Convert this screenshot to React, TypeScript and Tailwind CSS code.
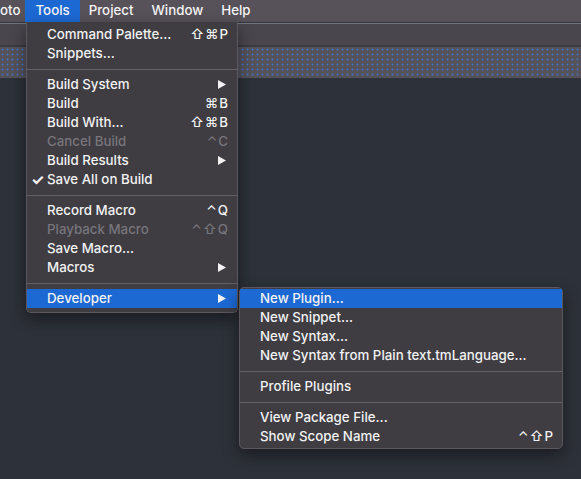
import React from "react";

type Item = {
  label?: string;
  shortcut?: string;
  arrow?: boolean;
  disabled?: boolean;
  checked?: boolean;
  active?: boolean;
  sep?: boolean;
};

const toolsItems: Item[] = [
  { label: "Command Palette...", shortcut: "⇧⌘P" },
  { label: "Snippets..." },
  { sep: true },
  { label: "Build System", arrow: true },
  { label: "Build", shortcut: "⌘B" },
  { label: "Build With...", shortcut: "⇧⌘B" },
  { label: "Cancel Build", shortcut: "⌃C", disabled: true },
  { label: "Build Results", arrow: true },
  { label: "Save All on Build", checked: true },
  { sep: true },
  { label: "Record Macro", shortcut: "⌃Q" },
  { label: "Playback Macro", shortcut: "⌃⇧Q", disabled: true },
  { label: "Save Macro..." },
  { label: "Macros", arrow: true },
  { sep: true },
  { label: "Developer", arrow: true, active: true },
];

const developerItems: Item[] = [
  { label: "New Plugin...", active: true },
  { label: "New Snippet..." },
  { label: "New Syntax..." },
  { label: "New Syntax from Plain text.tmLanguage..." },
  { sep: true },
  { label: "Profile Plugins" },
  { sep: true },
  { label: "View Package File..." },
  { label: "Show Scope Name", shortcut: "⌃⇧P" },
];

const Arrow = () => (
  <svg width="8" height="9" viewBox="0 0 8 9" className="mr-[3px]">
    <polygon points="0,0 8,4.5 0,9" fill="#f2f2f2" />
  </svg>
);

const MenuRow = ({ item }: { item: Item }) => {
  if (item.sep) {
    return (
      <div className="h-[12px] flex items-center">
        <div className="h-px w-full bg-[#636167]" />
      </div>
    );
  }
  const color = item.disabled ? "text-[#77757b]" : "text-[#f2f2f2]";
  return (
    <div
      className={`relative h-[19px] flex items-center justify-between pl-[20px] pr-[8px] ${color} ${
        item.active ? "bg-[#1c69d4]" : ""
      }`}
    >
      {item.checked && (
        <span className="absolute left-[4px] top-0 leading-[19px] text-[15px] font-bold">✓</span>
      )}
      <span className="whitespace-nowrap">{item.label}</span>
      {item.shortcut && <span className="tracking-[1px] whitespace-nowrap">{item.shortcut}</span>}
      {item.arrow && <Arrow />}
    </div>
  );
};

export default function App() {
  return (
    <div
      className="relative w-[581px] h-[479px] overflow-hidden bg-[#2d3139] text-[13.3px] font-medium"
      style={{ fontFamily: "Inter, 'DejaVu Sans', sans-serif" }}
    >
      {/* Menu bar */}
      <div className="h-[22px] flex items-center bg-[#575159] text-[#f4f4f4]">
        <span className="pr-[5px]">oto</span>
        <span className="h-full flex items-center px-[10px] bg-[#1c69d4]">Tools</span>
        <span className="px-[9px]">Project</span>
        <span className="px-[9px]">Window</span>
        <span className="px-[9px]">Help</span>
      </div>

      {/* Editor chrome behind the menus */}
      <div className="h-px bg-[#2b3b41]" />
      <div className="h-px bg-[#76737a]" />
      <div className="h-[21px] bg-[#49474d]" />
      <div className="h-[2px] bg-[#3a3b41]" />
      <div className="h-[31px] bg-[#55525a] bg-[radial-gradient(circle,#3f71c8_0.9px,transparent_1.1px)] bg-[length:5px_5px]" />

      {/* Tools menu */}
      <div className="absolute left-[26px] top-[22px] w-[212px] pt-[3px] pb-[4px] bg-[#3f3d42] border-x border-b border-[#5a585e] rounded-b-[5px] shadow-[0_6px_16px_rgba(0,0,0,0.45)]">
        {toolsItems.map((item, i) => (
          <MenuRow key={i} item={item} />
        ))}
      </div>

      {/* Developer submenu */}
      <div className="absolute left-[239px] top-[287px] w-[324px] pt-px pb-[2px] bg-[#3f3d42] border border-[#5a585e] rounded-[5px] shadow-[0_6px_16px_rgba(0,0,0,0.45)]">
        {developerItems.map((item, i) => (
          <MenuRow key={i} item={item} />
        ))}
      </div>
    </div>
  );
}
